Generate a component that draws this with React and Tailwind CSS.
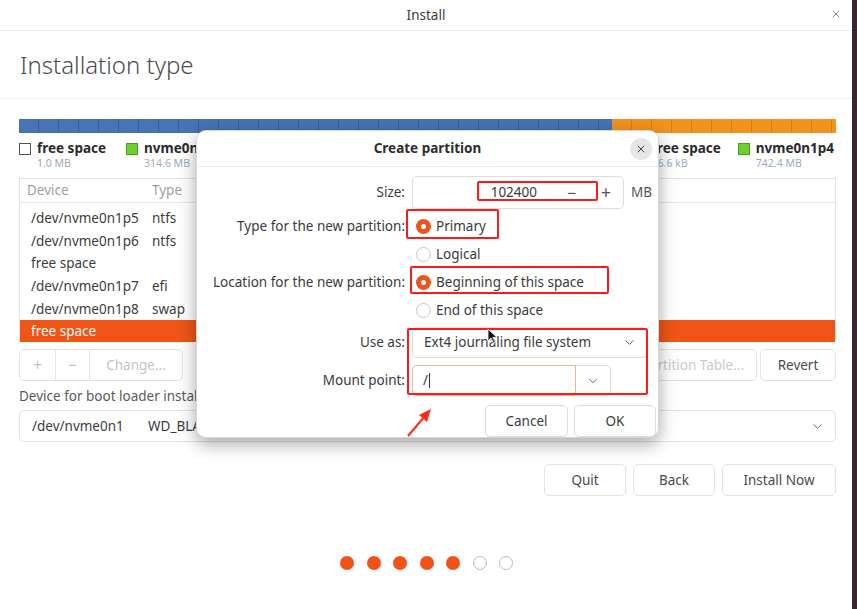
import React from 'react'
import { ChevronDown, X } from 'lucide-react'

function Radio({ checked, label }) {
    return (
        <div className="flex items-center h-[28px] pl-[4px] gap-[5px]">
            {checked ? (
                <span className="w-[15px] h-[15px] rounded-full bg-[#e95420] flex items-center justify-center">
                    <span className="w-[5px] h-[5px] rounded-full bg-white" />
                </span>
            ) : (
                <span className="w-[15px] h-[15px] rounded-full border border-[#c6c6c6] bg-white" />
            )}
            <span>{label}</span>
        </div>
    )
}

function Row({ label, className = '', children }) {
    return (
        <div className={`flex items-center ${className}`}>
            <div className="w-[208px] text-right whitespace-nowrap">{label}</div>
            <div className="ml-[7px] flex items-center h-full">{children}</div>
        </div>
    )
}

function CreatePartition() {
    return (
        <div className="absolute left-[196px] top-[130px] w-[463px] h-[308px] bg-white rounded-[10px] border border-[#d6d6d6] shadow-[0_6px_18px_rgba(0,0,0,0.35)] text-[13.5px] text-[#3a3a3a]">
            <div className="relative h-[36px] border-b border-[#ececec] flex items-center justify-center">
                <span className="font-bold text-[13.5px] text-[#2e2e2e]">Create partition</span>
                <span className="absolute right-[6px] top-[7px] w-[22px] h-[22px] rounded-full bg-[#e6e6e6] flex items-center justify-center">
                    <X size={12} strokeWidth={2} className="text-[#444]" />
                </span>
            </div>

            <Row label="Size:" className="mt-[9px] h-[33px]">
                <div className="w-[212px] h-[33px] border border-[#dcdcdc] rounded-[5px] flex items-center">
                    <div className="flex-1 text-right pr-[17px]">102400</div>
                    <div className="w-[35px] text-center text-[16px] text-[#555]">−</div>
                    <div className="w-[34px] text-center text-[18px] text-[#555]">+</div>
                </div>
                <span className="ml-[7px] text-[#555]">MB</span>
            </Row>
            <Row label="Type for the new partition:" className="mt-[3px] h-[28px]">
                <Radio checked label="Primary" />
            </Row>
            <Row label="" className="h-[28px]">
                <Radio label="Logical" />
            </Row>
            <Row label="Location for the new partition:" className="h-[28px]">
                <Radio checked label="Beginning of this space" />
            </Row>
            <Row label="" className="h-[28px]">
                <Radio label="End of this space" />
            </Row>
            <Row label="Use as:" className="mt-[3px] h-[31px]">
                <div className="w-[236px] h-[31px] border border-[#dcdcdc] rounded-[5px] flex items-center justify-between pl-[11px] pr-[10px]">
                    <span>Ext4 journaling file system</span>
                    <ChevronDown size={15} strokeWidth={1.5} className="text-[#555]" />
                </div>
            </Row>
            <Row label="Mount point:" className="mt-[7px] h-[31px]">
                <div className="flex h-[31px]">
                    <div className="w-[164px] border border-[#eab59b] rounded-l-[5px] flex items-center pl-[10px]">
                        <span>/</span>
                        <span className="ml-[1px] w-[1px] h-[15px] bg-[#333]" />
                    </div>
                    <div className="w-[35px] border border-l-0 border-[#dcdcdc] rounded-r-[5px] flex items-center justify-center">
                        <ChevronDown size={14} strokeWidth={1.5} className="text-[#555]" />
                    </div>
                </div>
            </Row>
            <div className="mt-[9px] flex justify-end gap-[6px] pr-[2px]">
                <button className="w-[83px] h-[32px] border border-[#dcdcdc] rounded-[5px]">Cancel</button>
                <button className="w-[82px] h-[32px] border border-[#dcdcdc] rounded-[5px]">OK</button>
            </div>

            {/* annotations */}
            <div className="absolute left-[280px] top-[50px] w-[121px] h-[20px] border-2 border-[#ff1a1a] rounded-[2px]" />
            <div className="absolute left-[209px] top-[78px] w-[93px] h-[30px] border-2 border-[#ff1a1a] rounded-[2px]" />
            <div className="absolute left-[213px] top-[135px] w-[199px] h-[28px] border-2 border-[#ff1a1a] rounded-[2px]" />
            <div className="absolute left-[210px] top-[197px] w-[241px] h-[67px] border-2 border-[#ff1a1a] rounded-[2px]" />
            <svg className="absolute left-[208px] top-[276px]" width="30" height="32" viewBox="0 0 30 32">
                <line x1="3" y1="29" x2="20" y2="9" stroke="#ff2a1a" strokeWidth="2" />
                <polygon points="26,2 14,8 22,15" fill="#ff2a1a" />
            </svg>
            <svg className="absolute left-[290px] top-[197px]" width="11" height="16" viewBox="0 0 11 16">
                <path d="M1 1 L1 13 L4 10 L6.5 15 L8.2 14.2 L5.8 9.4 L10 9.4 Z" fill="#111" stroke="#fff" strokeWidth="0.8" />
            </svg>
        </div>
    )
}

const rows = [
    ['/dev/nvme0n1p5', 'ntfs'],
    ['/dev/nvme0n1p6', 'ntfs'],
    ['free space', ''],
    ['/dev/nvme0n1p7', 'efi'],
    ['/dev/nvme0n1p8', 'swap'],
]

function LegendItem({ free, name, size }) {
    return (
        <div className="flex">
            {free ? (
                <span className="mt-[3px] w-[12px] h-[12px] border border-[#555] bg-white" />
            ) : (
                <span className="mt-[3px] w-[12px] h-[12px] border border-[#4b9a1e] bg-[#6cd12c]" />
            )}
            <div className="ml-[6px] flex flex-col">
                <span className="h-[16px] leading-[16px] font-bold text-[13.5px] text-[#2a2a2a]">{name}</span>
                <span className="h-[14px] leading-[14px] text-[10.5px] text-[#9aacbd]">{size}</span>
            </div>
        </div>
    )
}

export default function App() {
    return (
        <div className="w-[857px] h-[609px] flex bg-[#3a2630] font-['Noto_Sans',sans-serif] overflow-hidden">
            <div className="relative w-[852px] h-[609px] bg-white">
                <div className="relative h-[31px] border-b border-[#ededed] flex items-center justify-center">
                    <span className="text-[13.5px] text-[#3d3d3d]">Install</span>
                    <X size={12} strokeWidth={1.5} className="absolute right-[10px] top-[8px] text-[#666]" />
                </div>
                <div className="h-[68px] border-b border-[#f0f0f0] flex items-center pl-[20px]">
                    <h1 className="text-[24px] font-light text-[#4d4d4d]">Installation type</h1>
                </div>

                <div className="pl-[19px] pr-[16px] pt-[20px] text-[13.5px] text-[#3c3c3c]">
                    <div className="flex h-[14px]">
                        <div className="w-[593px] h-full bg-[repeating-linear-gradient(90deg,#4674b4_0px,#4674b4_19px,#38609c_19px,#38609c_20px)]" />
                        <div className="flex-1 h-full bg-[repeating-linear-gradient(90deg,#f2921f_0px,#f2921f_19px,#d97c12_19px,#d97c12_20px)]" />
                    </div>

                    <div className="mt-[7px] flex justify-between h-[30px]">
                        <div className="flex gap-[20px]">
                            <LegendItem free name="free space" size="1.0 MB" />
                            <LegendItem name="nvme0n1p5" size="314.6 MB" />
                        </div>
                        <div className="flex gap-[17px] pr-[2px]">
                            <LegendItem free name="free space" size="66.6 kB" />
                            <LegendItem name="nvme0n1p4" size="742.4 MB" />
                        </div>
                    </div>

                    <div className="mt-[8px] h-[163px] border border-[#e2e2e2]">
                        <div className="h-[24px] border-b border-[#e6e6e6] flex items-center text-[#a0a0a0]">
                            <span className="w-[132px] pl-[7px]">Device</span>
                            <span>Type</span>
                        </div>
                        <div className="pt-[4px]">
                            {rows.map(([d, t], i) => (
                                <div key={i} className="h-[22.6px] flex items-center">
                                    <span className="w-[132px] pl-[11px]">{d}</span>
                                    <span>{t}</span>
                                </div>
                            ))}
                            <div className="h-[22px] flex items-center bg-[#f05517] text-white pl-[11px]">free space</div>
                        </div>
                    </div>

                    <div className="mt-[8px] flex justify-between h-[32px]">
                        <div className="flex border border-[#e2e2e2] rounded-[5px] text-[#c4c4c4]">
                            <div className="w-[36px] flex items-center justify-center text-[16px] border-r border-[#e2e2e2]">+</div>
                            <div className="w-[34px] flex items-center justify-center text-[16px] border-r border-[#e2e2e2]">−</div>
                            <div className="w-[92px] flex items-center justify-center">Change...</div>
                        </div>
                        <div className="flex gap-[3px]">
                            <div className="w-[160px] border border-[#e2e2e2] rounded-[5px] flex items-center justify-center text-[#cacaca] whitespace-nowrap">New Partition Table...</div>
                            <div className="w-[76px] border border-[#e2e2e2] rounded-[5px] flex items-center justify-center text-[#4a4a4a]">Revert</div>
                        </div>
                    </div>

                    <div className="mt-[7px] h-[16px] leading-[16px] text-[#5a5a5a]">Device for boot loader installation:</div>
                    <div className="mt-[6px] h-[32px] border border-[#e2e2e2] rounded-[5px] flex items-center pl-[12px] pr-[10px]">
                        <span className="w-[116px]">/dev/nvme0n1</span>
                        <span className="flex-1">WD_BLACK SN770 1TB (1.0 TB)</span>
                        <ChevronDown size={15} strokeWidth={1.5} className="text-[#666]" />
                    </div>

                    <div className="mt-[22px] flex justify-end gap-[7px] text-[#4a4a4a]">
                        <button className="w-[82px] h-[32px] border border-[#e2e2e2] rounded-[5px]">Quit</button>
                        <button className="w-[82px] h-[32px] border border-[#e2e2e2] rounded-[5px]">Back</button>
                        <button className="w-[114px] h-[32px] border border-[#e2e2e2] rounded-[5px]">Install Now</button>
                    </div>

                    <div className="mt-[60px] flex justify-center gap-[12.5px] pr-[2px]">
                        {[0, 1, 2, 3, 4].map((i) => (
                            <span key={i} className="w-[14px] h-[14px] rounded-full bg-[#f0521a]" />
                        ))}
                        {[5, 6].map((i) => (
                            <span key={i} className="w-[14px] h-[14px] rounded-full border border-[#c8b8b0] bg-white" />
                        ))}
                    </div>
                </div>

                <CreatePartition />
            </div>
        </div>
    )
}
